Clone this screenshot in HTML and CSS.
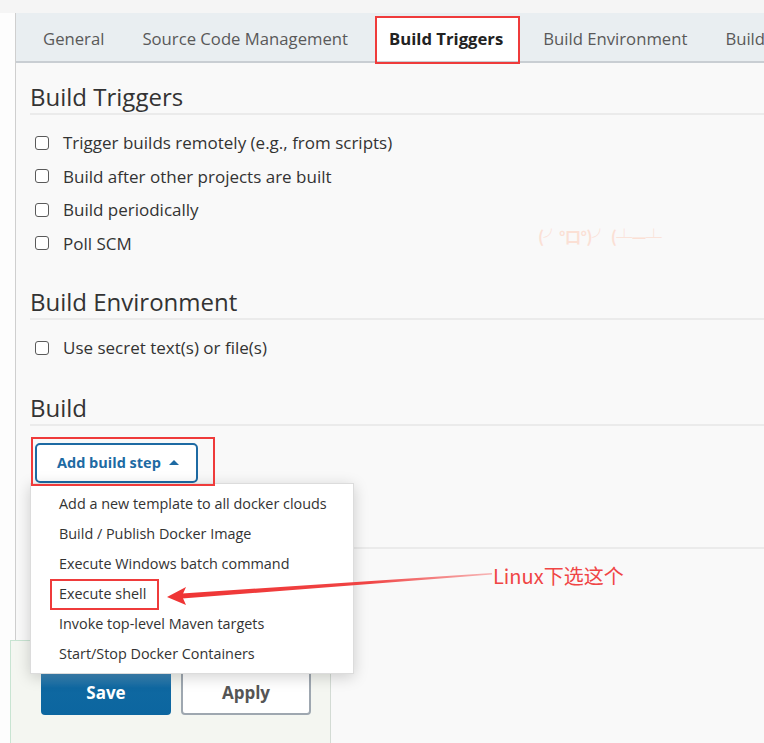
FILE: index.html
```html
<!DOCTYPE html>
<html>
<head>
<meta charset="utf-8">
<title>Build Triggers</title>
<link rel="stylesheet" href="styles.css">
</head>
<body>
<div class="topbar"></div>
<div class="frame">
  <div class="gutter"></div>
  <div class="main">
    <nav class="tabs">
      <span class="tab">General</span>
      <span class="tab">Source Code Management</span>
      <span class="tab active">Build Triggers<span class="mark mark-tab"></span></span>
      <span class="tab">Build Environment</span>
      <span class="tab">Build</span>
    </nav>
    <div class="content">
      <section class="sec">
        <h2 class="sec-title">Build Triggers</h2>
        <ul class="checks">
          <li><span class="cb"></span>Trigger builds remotely (e.g., from scripts)</li>
          <li><span class="cb"></span>Build after other projects are built</li>
          <li><span class="cb"></span>Build periodically</li>
          <li><span class="cb"></span>Poll SCM</li>
        </ul>
      </section>
      <section class="sec">
        <h2 class="sec-title">Build Environment</h2>
        <ul class="checks">
          <li><span class="cb"></span>Use secret text(s) or file(s)</li>
        </ul>
      </section>
      <section class="sec sec-build">
        <h2 class="sec-title">Build</h2>
        <div class="build-body">
          <div class="step-wrap">
            <button class="add-step">Add build step <span class="caret"></span></button>
            <span class="mark mark-btn"></span>
            <ul class="menu">
              <li>Add a new template to all docker clouds</li>
              <li>Build / Publish Docker Image</li>
              <li>Execute Windows batch command</li>
              <li><span class="hl">Execute shell<span class="mark mark-item"></span></span></li>
              <li>Invoke top-level Maven targets</li>
              <li>Start/Stop Docker Containers</li>
            </ul>
          </div>
        </div>
      </section>
    </div>
  </div>
</div>

<div class="savebar">
  <button class="btn btn-save">Save</button>
  <button class="btn btn-apply">Apply</button>
</div>

<div class="kaomoji">(╯°口°)╯ (┴—┴</div>

<svg class="arrow" width="764" height="743" viewBox="0 0 764 743">
  <defs>
    <linearGradient id="fade" x1="183" y1="0" x2="492" y2="0" gradientUnits="userSpaceOnUse">
      <stop offset="0" stop-color="#ef3535"/>
      <stop offset="0.6" stop-color="#f04444"/>
      <stop offset="1" stop-color="#f7b5b5"/>
    </linearGradient>
  </defs>
  <polygon points="182,593.5 492,573 492,574.5 182,598.5" fill="url(#fade)"/>
  <polygon points="167,597 186,587 182,596 186,605" fill="#ef3535"/>
</svg>
<div class="note">Linux下选这个</div>
</body>
</html>
```

FILE: styles.css
```css
* { box-sizing: border-box; }
html, body { margin: 0; padding: 0; }
body {
  position: relative;
  width: 764px;
  height: 743px;
  overflow: hidden;
  background: #f8f8f8;
  font-family: "Open Sans", "Noto Sans", sans-serif;
  color: #333;
}

.topbar { height: 13px; background: #f5f5f5; }

.frame { display: flex; min-height: 730px; }
.gutter {
  width: 16px;
  flex: none;
  background: #fdfdfd;
  border-right: 1px solid #cfcfcf;
}
.main { flex: 1; min-width: 0; background: #f9f9f9; }

/* tabs */
.tabs {
  display: flex;
  align-items: flex-end;
  height: 50px;
  padding-left: 7px;
  background: #e9eef1;
  border-bottom: 2px solid #c9ced3;
  white-space: nowrap;
}
.tab {
  position: relative;
  flex: none;
  height: 45px;
  line-height: 45px;
  padding: 0 18px 0 20px;
  font-size: 16.7px;
  color: #595959;
}
.tab.active {
  height: 44px;
  line-height: 44px;
  margin: 0 4px 0 11px;
  padding: 0 15px 0 12px;
  background: #fff;
  color: #222;
  font-weight: 700;
  border-right: 1px solid #c9ced3;
}

.mark { position: absolute; border: 2px solid #ef3b3b; pointer-events: none; }
.mark-tab { left: -2px; top: -1px; right: -2px; bottom: -3px; }

/* content */
.content { padding-left: 14px; }
.sec { padding-top: 26px; }
.sec:first-child { padding-top: 18px; }
.sec-build { padding-top: 27px; }
.sec-title {
  margin: 0;
  font-size: 24px;
  font-weight: 500;
  line-height: 32px;
  color: #333;
  border-bottom: 2px solid #ebebeb;
}
.checks { list-style: none; margin: 11px 0 0; padding: 0 0 0 5px; }
.checks li {
  display: flex;
  align-items: center;
  height: 33.5px;
  font-size: 17px;
  color: #333;
}
.cb {
  flex: none;
  width: 14px;
  height: 14px;
  margin-right: 14px;
  border: 1.5px solid #5a5a5a;
  border-radius: 3px;
  background: #fff;
}

.build-body {
  padding: 17px 0 64px 5px;
  border-bottom: 2px solid #ebebeb;
}
.step-wrap { position: relative; width: 163px; }
.add-step {
  display: flex;
  align-items: center;
  width: 163px;
  height: 40px;
  padding: 0 0 0 20px;
  background: #fff;
  border: 2px solid #1d6aa3;
  border-radius: 5px;
  font-family: inherit;
  font-size: 14.5px;
  font-weight: 700;
  color: #1d6aa3;
}
.caret {
  display: inline-block;
  width: 0;
  height: 0;
  margin-left: 8px;
  border-left: 5px solid transparent;
  border-right: 5px solid transparent;
  border-bottom: 5px solid #1d6aa3;
}
.mark-btn { left: -4px; top: -6px; width: 184px; height: 49px; z-index: 3; }

.menu {
  position: absolute;
  left: -5px;
  top: 40px;
  z-index: 2;
  width: 324px;
  margin: 0;
  padding: 5px 0 4px;
  list-style: none;
  background: #fff;
  border: 1px solid #dcdcdc;
  box-shadow: 0 3px 14px rgba(0, 0, 0, 0.18);
}
.menu li {
  height: 30px;
  line-height: 30px;
  padding-left: 28px;
  font-size: 14.4px;
  color: #333;
  white-space: nowrap;
}
.hl { position: relative; display: inline-block; }
.mark-item { left: -9px; top: 0; width: 109px; height: 31px; }

/* save bar */
.savebar {
  position: absolute;
  left: 10px;
  top: 640px;
  z-index: 1;
  display: flex;
  gap: 10px;
  width: 321px;
  height: 103px;
  padding: 29px 0 0 30px;
  background: #f4f6f1;
  border-top: 1px solid #c8e4d2;
  border-left: 1px solid #c8e4d2;
  border-right: 1px solid #d3dbd4;
}
.btn {
  width: 130px;
  height: 45px;
  border-radius: 4px;
  font-family: inherit;
  font-size: 17px;
  font-weight: 700;
}
.btn-save {
  color: #fff;
  border: none;
  background: linear-gradient(#4a8fbd, #0f68a1 40%, #0c66a0);
}
.btn-apply {
  color: #555;
  background: #fff;
  border: 2px solid #9ea7b0;
}

/* overlays */
.kaomoji {
  position: absolute;
  left: 538px;
  top: 224px;
  font-size: 16px;
  font-weight: 700;
  letter-spacing: -0.5px;
  color: #fbe0d5;
  font-family: "Noto Sans CJK SC", "Noto Sans", sans-serif;
  white-space: nowrap;
}
.arrow { position: absolute; left: 0; top: 0; z-index: 4; pointer-events: none; }
.note {
  position: absolute;
  left: 493px;
  top: 562px;
  z-index: 4;
  font-family: "Noto Sans CJK SC", "Noto Sans", sans-serif;
  font-size: 20px;
  line-height: 28px;
  color: #f04545;
  white-space: nowrap;
}
```
